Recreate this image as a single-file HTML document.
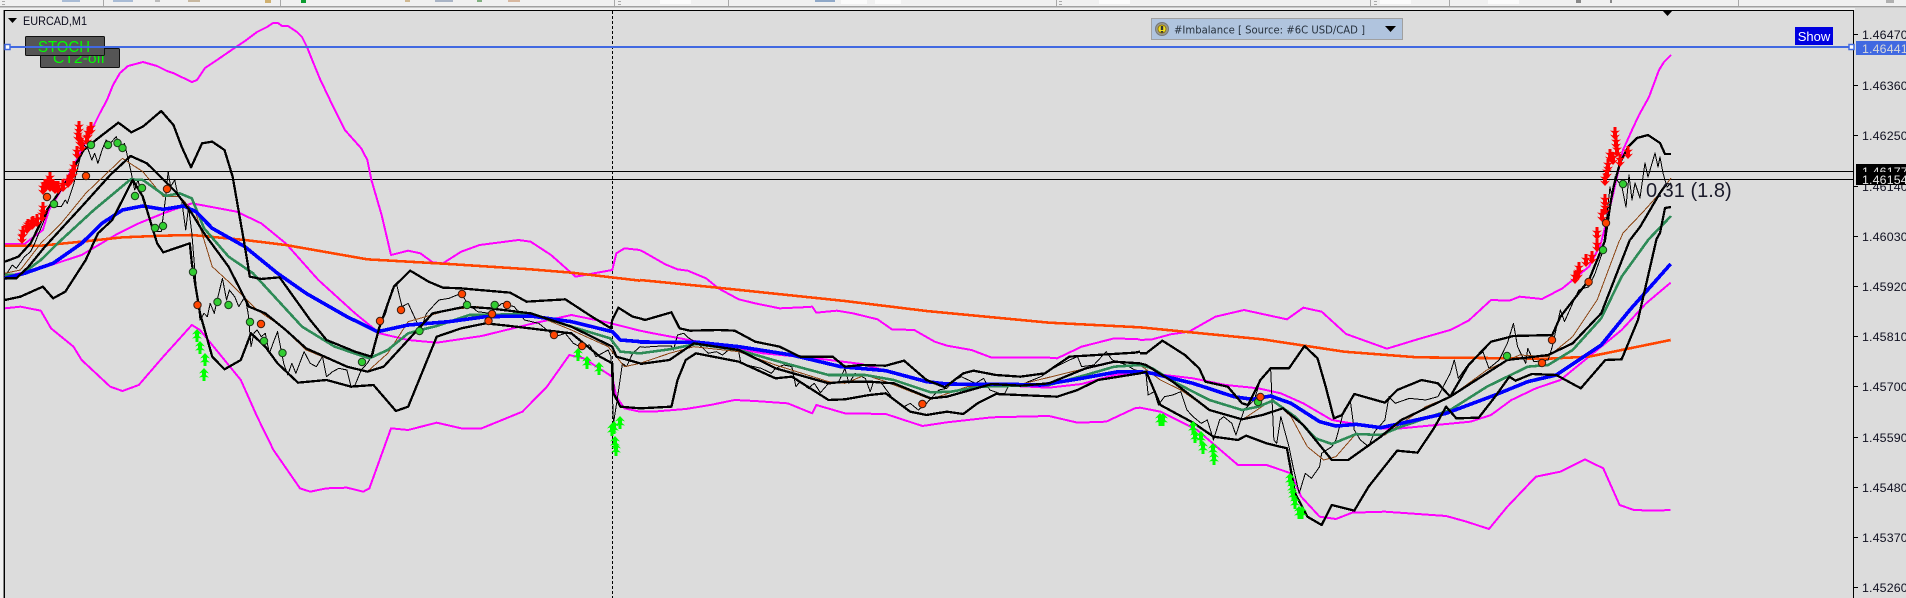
<!DOCTYPE html>
<html>
<head>
<meta charset="utf-8">
<title>EURCAD,M1</title>
<style>
html,body{margin:0;padding:0;width:1906px;height:598px;overflow:hidden;background:#dcdcdc}
svg{display:block;position:absolute;left:0;top:0}
polyline{fill:none;stroke-linejoin:round;vector-effect:non-scaling-stroke}
.m{stroke:#ff00ff;stroke-width:2}
.o{stroke:#ff4500;stroke-width:2.6}
.p{stroke:#000;stroke-width:1}
.br{stroke:#8b4513;stroke-width:1}
.g{stroke:#2e8b57;stroke-width:2.6}
.b{stroke:#0000ff;stroke-width:3.6}
.k{stroke:#000;stroke-width:2.3}
.lab{font:12.4px "Liberation Sans",sans-serif;fill:#101020}
text{white-space:pre}
</style>
</head>
<body>
<svg width="1906" height="598" viewBox="0 0 1906 598" xmlns="http://www.w3.org/2000/svg">
<defs>
<polygon id="u" points="0,-7 5,-1.5 2,-2.5 2,0 5,2.5 1.5,2 1.5,6 -1.5,6 -1.5,2 -5,2.5 -2,0 -2,-2.5 -5,-1.5" fill="#00ff00"/>
<polygon id="d" points="0,7 5,1.5 2,2.5 2,0 5,-2.5 1.5,-2 1.5,-6 -1.5,-6 -1.5,-2 -5,-2.5 -2,0 -2,2.5 -5,1.5" fill="#ff0000"/>
<g id="gd"><circle r="3.7" fill="#32cd32" stroke="#1c3a1c" stroke-width="1"/></g>
<g id="od"><circle r="3.7" fill="#ff4500" stroke="#3a1c10" stroke-width="1"/></g>
</defs>

<!-- toolbar strip -->
<rect x="0" y="0" width="1906" height="10" fill="#f0f0f0"/>
<rect x="0" y="6" width="1906" height="1.5" fill="#a0a0a0"/>
<rect x="1855" y="8" width="51" height="2" fill="#dcdcdc"/>
<rect x="0" y="10" width="4" height="588" fill="#f0f0f0"/>
<rect x="3" y="10" width="1" height="588" fill="#888"/>
<g fill="#a8a8a8">
<rect x="103" y="0" width="1" height="6"/><rect x="280" y="0" width="1" height="6"/><rect x="614" y="0" width="1" height="6"/>
<rect x="728" y="0" width="1" height="6"/><rect x="1056" y="0" width="1" height="6"/><rect x="1370" y="0" width="1" height="6"/>
<rect x="1449" y="0" width="1" height="6"/><rect x="1738" y="0" width="1" height="6"/>
<rect x="2" y="1" width="3" height="1"/><rect x="2" y="4" width="3" height="1"/>
<rect x="618" y="1" width="3" height="1"/><rect x="618" y="4" width="3" height="1"/>
<rect x="1059" y="1" width="3" height="1"/><rect x="1059" y="4" width="3" height="1"/>
<rect x="1374" y="1" width="3" height="1"/><rect x="1374" y="4" width="3" height="1"/>
</g>
<g fill="#fbfbfb">
<rect x="660" y="0" width="31" height="4"/><rect x="841" y="0" width="26" height="4"/><rect x="875" y="0" width="26" height="4"/>
<rect x="1099" y="0" width="31" height="4"/><rect x="1380" y="0" width="31" height="4"/><rect x="1488" y="0" width="31" height="4"/>
</g>
<rect x="62" y="0" width="18" height="2" fill="#a9bcd6"/>
<rect x="113" y="0" width="20" height="2" fill="#a9bcd6"/>
<rect x="155" y="0" width="5" height="2" fill="#bbb"/>
<rect x="188" y="0" width="12" height="2" fill="#c8b8a0"/>
<rect x="265" y="0" width="6" height="3" fill="#d0b070"/>
<rect x="301" y="0" width="5" height="3" fill="#0c9c30"/>
<rect x="405" y="0" width="5" height="2" fill="#d0b890"/>
<rect x="435" y="0" width="18" height="2" fill="#a9b4c6"/>
<rect x="477" y="0" width="5" height="2" fill="#80b080"/>
<rect x="508" y="0" width="12" height="2" fill="#d8b8a0"/>
<rect x="815" y="0" width="20" height="2" fill="#8fa8c8"/>
<rect x="1576" y="0" width="5" height="3" fill="#888"/>
<rect x="1610" y="0" width="2" height="3" fill="#888"/>
<rect x="1886" y="0" width="8" height="3" fill="#b0b0b0"/>

<!-- frame -->
<rect x="4.5" y="10.5" width="1849" height="600" fill="#dcdcdc" stroke="#000" stroke-width="1"/>

<!-- panels behind lines -->
<rect x="40.5" y="48.5" width="79" height="19" fill="#555" stroke="#111" rx="1"/>
<text x="53" y="63" font-family="'Liberation Sans',sans-serif" font-size="15" fill="#00ff00" textLength="52" lengthAdjust="spacingAndGlyphs">CT2-off</text>
<rect x="25.5" y="36.5" width="79" height="19" fill="#555" stroke="#111" rx="1"/>
<text x="38" y="52" font-family="'Liberation Sans',sans-serif" font-size="15.5" fill="#00ff00" textLength="52" lengthAdjust="spacingAndGlyphs">STOCH</text>

<!-- title -->
<polygon points="8,18 17,18 12.5,23" fill="#000"/>
<text x="23" y="25" font-family="'Liberation Sans',sans-serif" font-size="12" fill="#0a0a1a" textLength="64" lengthAdjust="spacingAndGlyphs">EURCAD,M1</text>

<!-- crosshair -->
<line x1="612.5" y1="11" x2="612.5" y2="598" stroke="#000" stroke-width="1" stroke-dasharray="3 2"/>

<!-- horizontal lines -->
<rect x="5" y="171" width="1849" height="1" fill="#000"/>
<rect x="5" y="179" width="1849" height="1" fill="#000"/>

<g shape-rendering="crispEdges">
<!-- magenta top left abs -->
<polyline class="m" points="93,127 100,113 107,100 113,85 120,73 128,66 143,62 157,66 167,71 173,73 192,82 197,80 205,68 217,60 233,49 245,41 257,32 267,27 273,23 278,23 282,26 288,26 297,32 302,37 307,47 313,62 320,79 330,100"/>
<polyline class="m" points="1601,243 1613,195 1623,150 1632,130 1639,115 1649,97 1659,70 1664,62 1671,55"/>

<!-- ZONE A: x 0-640 -->
<g transform="translate(0,100) scale(.40816,.33333)">
<polyline class="m" points="12,432 60,432 105,390 120,330 150,270 200,150 228,81"/>
<polyline class="m" points="808,0 845,90 885,145 900,180 910,240 935,345 958,465 1000,452 1030,460 1060,487 1085,490 1130,455 1175,435 1270,420 1300,425 1350,465 1410,530 1500,510 1510,460 1530,445 1568,450"/>
<polyline class="m" points="12,530 100,505 200,465 290,400 340,370 400,340 470,310 580,335 640,370 700,430 780,540 870,640 930,700 1000,720 1070,728 1180,708 1300,672 1400,645 1480,665 1568,692"/>
<polyline class="m" points="12,625 50,620 100,632 125,685 180,740 200,780 270,860 300,873 340,855 400,770 470,675 490,690 550,780 590,840 630,950 670,1050 735,1165 760,1175 800,1165 850,1163 890,1175 905,1165 958,985 1000,990 1070,968 1130,985 1180,985 1280,935 1340,860 1395,765 1430,775 1500,830 1510,890 1530,925 1568,935"/>
<polyline class="o" points="12,437 100,437 200,425 300,412 400,407 470,405 600,420 700,435 900,478 1100,492 1300,508 1400,518 1568,542"/>
<polyline class="p" points="12,530 30,495 40,505 50,488 60,470 75,455 85,430 100,385 115,340 125,305 135,320 150,320 160,300 165,310 180,255 195,180 205,135 215,145 225,180 232,160 240,190 250,150 260,120 270,130 285,110 295,150 305,130 320,210 330,270 338,240 350,300 365,350 380,395 395,395 405,300 412,215 418,260 428,240 435,280 445,300 455,390 462,320 470,400 480,550 490,660 500,640 508,650 515,610 525,640 532,600 545,535 555,600 562,570 575,590 585,620 600,590 608,640 615,740 622,700 630,690 640,710 650,700 660,760 672,720 680,695 695,790 705,825 715,790 725,820 745,755 760,790 775,800 790,770 800,830 815,815 830,805 850,810 860,860 870,855 885,810 900,790 915,760 925,690 945,640 960,570 972,555 985,620 1000,610 1015,650 1030,690 1045,640 1060,620 1075,600 1100,595 1130,580 1145,610 1170,635 1200,640 1215,625 1230,610 1260,620 1285,660 1320,670 1340,690 1360,710 1385,700 1405,730 1420,740 1445,735 1460,770 1490,750 1497,770 1503,970 1512,900 1525,790 1535,800 1550,760 1568,740"/>
<polyline class="br" points="12,520 50,510 100,430 150,370 210,280 300,175 350,215 400,290 440,290 480,340 520,500 560,545 630,630 690,680 750,750 860,805 900,815 950,760 1000,665 1100,630 1170,620 1300,640 1400,690 1490,740 1530,800 1568,790"/>
<polyline class="g" points="12,525 50,525 100,480 150,420 230,330 320,238 350,240 405,288 440,280 470,295 500,385 560,470 620,520 680,600 740,680 820,740 905,775 950,750 1000,700 1030,690 1070,678 1150,645 1200,645 1300,640 1400,680 1495,715 1520,755 1568,760"/>
<polyline class="b" points="12,535 60,520 130,490 200,430 250,370 300,330 350,318 400,328 450,318 480,335 520,385 600,440 680,520 750,580 850,650 925,695 1000,675 1100,665 1190,650 1300,648 1400,665 1500,695 1520,720 1568,725"/>
<polyline class="k" points="12,535 40,535 70,500 110,440 200,320 270,225 320,168 360,190 430,275 470,340 500,400 560,500 610,620 650,640 700,690 750,745 850,800 900,815 940,800 1000,720 1060,640 1140,620 1200,625 1300,640 1400,680 1500,740 1510,770 1568,790"/>
<polyline class="k" points="12,485 45,470 75,430 115,330 160,250 205,150 240,115 290,68 322,97 350,80 395,33 425,75 445,140 468,202 495,130 520,125 550,150 570,230 600,440 612,530 640,537 685,532 760,660 800,720 870,755 910,770 930,680 965,560 1005,512 1050,545 1085,563 1130,565 1175,570 1250,578 1290,605 1385,598 1450,650 1497,685 1500,660 1515,623 1550,650 1568,655"/>
<polyline class="k" points="12,600 50,590 105,560 130,595 160,575 210,480 240,400 275,360 325,240 350,290 385,430 400,457 465,430 470,490 490,640 520,770 550,808 590,780 615,700 650,740 680,790 730,848 800,840 860,860 915,855 970,933 1000,920 1070,710 1130,685 1190,670 1250,678 1400,700 1470,770 1500,790 1503,880 1520,920 1568,925"/>
</g>

<!-- ZONE B: x 640-1143 -->
<g transform="translate(600,240) scale(.40816,.33333)">
<polyline class="m" points="98,30 110,38 160,73 190,88 215,92 260,115 290,145 340,178 380,190 440,205 495,202 520,200 530,218 580,212 620,220 680,238 715,268 770,270 820,305 850,317 910,330 960,353 1100,353 1120,355 1180,320 1260,295 1323,298"/>
<polyline class="m" points="98,272 130,280 240,305 400,340 530,355 640,372 800,425 860,435 1000,437 1100,443 1180,432 1260,405 1323,396"/>
<polyline class="m" points="98,514 130,515 210,507 270,495 330,480 380,483 460,490 520,520 530,495 600,520 700,522 790,558 850,547 960,532 1100,528 1170,548 1240,545 1310,505 1323,503"/>
<polyline class="o" points="98,120 280,142 600,183 800,213 1100,248 1323,262"/>
<polyline class="p" points="98,320 110,322 125,320 150,318 175,318 180,330 190,285 205,280 215,292 225,300 240,310 265,340 285,335 300,345 315,330 340,335 345,370 370,378 395,385 420,400 430,385 450,375 470,380 480,440 490,425 510,445 525,430 540,458 560,430 585,425 600,385 610,430 625,400 650,415 662,455 670,425 690,430 705,455 720,480 745,500 760,490 780,510 800,490 830,450 850,445 870,420 885,410 920,430 940,415 955,450 990,465 1000,440 1040,430 1080,410 1110,385 1150,360 1170,350 1180,380 1210,375 1240,335 1255,360 1290,375 1310,390 1335,395"/>
<polyline class="br" points="98,370 170,340 230,320 340,335 430,375 560,425 600,430 650,405 700,425 810,478 900,440 1040,430 1190,385 1260,365 1323,372"/>
<polyline class="g" points="98,340 170,328 235,312 340,330 430,362 560,405 650,405 720,420 810,457 860,455 930,440 1100,435 1190,405 1260,380 1323,375"/>
<polyline class="b" points="98,306 240,307 340,320 470,345 590,380 700,392 800,425 850,432 1000,433 1080,435 1180,415 1270,395 1323,395"/>
<polyline class="k" points="98,372 170,360 230,310 340,330 430,385 560,430 600,425 660,425 720,430 810,475 850,470 960,432 1030,437 1100,430 1190,385 1260,365 1323,370"/>
<polyline class="k" points="98,235 110,240 175,217 195,265 220,272 290,270 330,272 380,305 440,320 490,350 570,350 600,380 640,375 700,377 745,362 800,420 845,442 890,400 915,392 970,405 1030,410 1090,400 1150,350 1310,338 1323,335"/>
<polyline class="k" points="98,505 175,500 190,420 210,360 235,340 340,365 430,415 470,410 560,480 600,478 660,465 700,460 760,515 800,525 850,515 890,522 925,490 970,462 1120,470 1170,450 1220,420 1323,400"/>
</g>

<!-- ZONE C: x 1140-1671 -->
<g transform="translate(1140,240) scale(.40816,.33333)">
<polyline class="m" points="0,300 30,298 75,283 120,275 185,230 255,210 360,238 400,203 445,215 505,282 605,326 680,298 760,270 805,242 860,180 905,182 930,170 985,177 1035,145 1060,120 1100,80 1130,10"/>
<polyline class="m" points="0,396 60,405 130,415 210,435 290,445 345,460 400,490 470,540 590,565 640,565 810,545 860,525 910,480 970,445 1030,420 1100,350 1180,270 1240,190 1300,128"/>
<polyline class="m" points="0,503 50,515 140,570 240,675 310,675 370,700 395,770 440,830 480,837 520,818 600,815 750,828 800,845 855,867 900,800 970,710 1030,695 1090,658 1135,685 1175,795 1210,810 1260,812 1300,810"/>
<polyline class="o" points="0,262 300,298 500,335 680,352 1000,356 1100,350 1200,325 1300,300"/>
<polyline class="p" points="10,395 15,405 20,465 35,455 45,495 60,470 80,465 100,455 115,510 130,530 150,550 165,540 180,600 195,540 205,530 225,550 235,585 255,510 280,480 295,420 320,385 328,600 335,610 345,530 365,620 375,680 390,760 405,700 420,715 440,680 445,640 470,620 480,600 500,510 515,480 525,570 540,600 560,620 575,575 600,540 610,470 625,490 660,475 700,480 730,470 760,400 770,360 780,415 800,380 840,335 855,385 880,360 900,310 915,250 925,320 945,370 950,325 965,365 1000,360 1010,320 1030,210 1040,245 1060,190 1075,150 1100,140 1115,100 1135,30"/>
<polyline class="br" points="0,375 50,420 100,450 170,510 250,540 325,478 370,530 410,620 450,660 480,650 530,580 600,585 700,500 760,470 850,390 930,345 1000,350 1060,290 1120,180 1175,0"/>
<polyline class="g" points="0,375 30,385 90,430 170,480 250,510 290,500 325,482 380,530 430,595 470,612 530,582 590,585 640,560 760,510 850,440 950,380 1000,375 1060,330 1130,235 1180,110 1245,0"/>
<polyline class="b" points="0,395 30,400 130,430 230,470 275,478 320,468 370,490 440,545 480,558 530,553 590,563 640,550 750,520 870,465 950,425 1020,405 1130,315 1200,210 1300,72"/>
<polyline class="k" points="0,370 15,375 80,425 170,510 250,538 300,525 350,505 400,555 470,660 510,660 590,590 640,540 760,470 900,360 1000,345 1060,310 1130,220 1200,0"/>
<polyline class="k" points="0,340 15,340 55,302 110,345 145,385 160,425 215,440 250,490 265,495 295,420 320,385 365,385 403,318 435,355 455,440 475,535 495,525 525,462 600,488 630,450 690,420 730,430 760,470 805,375 860,305 915,288 1010,285 1030,230 1100,120 1140,0"/>
<polyline class="k" points="0,400 15,395 50,495 130,548 180,590 240,600 260,587 310,610 360,625 380,760 410,830 445,855 470,795 525,812 560,740 630,632 680,638 720,565 750,500 775,535 830,533 870,470 905,410 920,422 960,402 1020,405 1080,445 1140,360 1180,358 1220,240 1265,0"/>
</g>

<!-- right upper abs -->
<polyline class="p" points="1603,250 1607,215 1610,187 1612,197 1615,177 1622,187 1626,207 1629,175 1632,200 1635,183 1640,198 1645,163 1648,177 1655,153 1658,167 1660,157 1663,173 1667,187 1671,183"/>
<polyline class="br" points="1620,240 1623,233 1643,212 1660,193 1671,178"/>
<polyline class="g" points="1648,240 1671,216"/>
<polyline class="k" points="1630,240 1640,227 1660,193 1667,183"/>
<polyline class="k" points="1605,240 1611,200 1614,185 1620,163 1628,147 1637,138 1648,135 1660,143 1665,154 1671,154"/>
<polyline class="k" points="1656,240 1660,233 1665,208 1671,207"/>
</g>

<!-- red arrows -->
<g>
<use href="#d" x="79" y="127"/><use href="#d" x="78" y="135"/><use href="#d" x="80" y="140"/><use href="#d" x="82" y="145"/><use href="#d" x="91" y="128"/><use href="#d" x="88" y="133"/><use href="#d" x="87" y="138"/><use href="#d" x="77" y="152"/><use href="#d" x="74" y="167"/><use href="#d" x="73" y="172"/><use href="#d" x="71" y="177"/><use href="#d" x="68" y="181"/><use href="#d" x="63" y="185"/><use href="#d" x="58" y="187"/><use href="#d" x="55" y="187"/><use href="#d" x="53" y="185"/><use href="#d" x="50" y="178"/><use href="#d" x="50" y="185"/><use href="#d" x="48" y="183"/><use href="#d" x="45" y="185"/><use href="#d" x="43" y="188"/><use href="#d" x="43" y="208"/><use href="#d" x="42" y="215"/><use href="#d" x="37" y="220"/><use href="#d" x="33" y="222"/><use href="#d" x="32" y="223"/><use href="#d" x="28" y="225"/><use href="#d" x="27" y="227"/><use href="#d" x="23" y="232"/><use href="#d" x="22" y="237"/>
<use href="#d" x="1615" y="133"/><use href="#d" x="1616" y="142"/><use href="#d" x="1617" y="150"/><use href="#d" x="1610" y="155"/><use href="#d" x="1628" y="152"/><use href="#d" x="1620" y="160"/><use href="#d" x="1613" y="158"/><use href="#d" x="1608" y="165"/><use href="#d" x="1607" y="172"/><use href="#d" x="1605" y="179"/><use href="#d" x="1605" y="200"/><use href="#d" x="1605" y="208"/><use href="#d" x="1602" y="215"/><use href="#d" x="1597" y="233"/><use href="#d" x="1597" y="245"/><use href="#d" x="1592" y="257"/><use href="#d" x="1586" y="260"/><use href="#d" x="1579" y="268"/><use href="#d" x="1578" y="273"/><use href="#d" x="1575" y="277"/>
</g>

<!-- green arrows -->
<g>
<use href="#u" x="197" y="336"/><use href="#u" x="200" y="348"/><use href="#u" x="205" y="360"/><use href="#u" x="204" y="375"/><use href="#u" x="578" y="355"/><use href="#u" x="587" y="363"/><use href="#u" x="599" y="369"/><use href="#u" x="612" y="430"/><use href="#u" x="614" y="428"/><use href="#u" x="620" y="423"/><use href="#u" x="615" y="443"/><use href="#u" x="616" y="450"/>
<use href="#u" x="1160" y="420"/><use href="#u" x="1163" y="420"/><use href="#u" x="1193" y="428"/><use href="#u" x="1195" y="437"/><use href="#u" x="1201" y="438"/><use href="#u" x="1203" y="448"/><use href="#u" x="1213" y="450"/><use href="#u" x="1214" y="459"/><use href="#u" x="1290" y="480"/><use href="#u" x="1292" y="488"/><use href="#u" x="1293" y="495"/><use href="#u" x="1295" y="503"/><use href="#u" x="1299" y="513"/><use href="#u" x="1302" y="513"/>
</g>

<!-- dots -->
<g>
<use href="#gd" x="91" y="145"/><use href="#gd" x="108" y="145"/><use href="#gd" x="117.5" y="143"/><use href="#gd" x="122.5" y="148"/><use href="#gd" x="54" y="204"/><use href="#gd" x="135" y="196"/><use href="#gd" x="142" y="188"/><use href="#gd" x="155" y="228"/><use href="#gd" x="163" y="226"/><use href="#gd" x="193" y="272"/><use href="#gd" x="217.5" y="302"/><use href="#gd" x="228.5" y="305"/><use href="#gd" x="250" y="322"/><use href="#gd" x="264" y="341"/><use href="#gd" x="282.5" y="353"/><use href="#gd" x="362" y="362"/><use href="#gd" x="419.5" y="331"/><use href="#gd" x="467" y="305"/><use href="#gd" x="494.7" y="305"/>
<use href="#od" x="86" y="176"/><use href="#od" x="47" y="197"/><use href="#od" x="167" y="189"/><use href="#od" x="197.5" y="305"/><use href="#od" x="261" y="324"/><use href="#od" x="380" y="321"/><use href="#od" x="401" y="310"/><use href="#od" x="462" y="294"/><use href="#od" x="488.5" y="321"/><use href="#od" x="492" y="314"/><use href="#od" x="507" y="305"/><use href="#od" x="554" y="335"/><use href="#od" x="582" y="346"/><use href="#od" x="922.4" y="404"/>
<use href="#gd" x="1258" y="402"/><use href="#od" x="1260.4" y="397"/><use href="#gd" x="1507" y="356"/><use href="#od" x="1552" y="340"/><use href="#od" x="1542" y="363"/><use href="#od" x="1588.6" y="282"/><use href="#gd" x="1603" y="250"/><use href="#od" x="1606" y="223"/><use href="#gd" x="1623" y="184"/>
</g>

<!-- Blue hline -->
<rect x="5" y="46" width="1849" height="2" fill="#4169e1"/>
<rect x="5" y="44.5" width="5" height="5" fill="#fff" stroke="#4169e1" stroke-width="1.5"/>
<rect x="1849" y="44.5" width="5" height="5" fill="#fff" stroke="#4169e1" stroke-width="1.5"/>

<!-- top marker -->
<polygon points="1662,10 1673,10 1667.5,16" fill="#000"/>

<!-- Imbalance panel -->
<rect x="1151.5" y="18.5" width="251" height="21" fill="#b0c4de" stroke="#a0a0a0" stroke-width="1"/>
<circle cx="1162" cy="29" r="6.5" fill="#9a9a8a" stroke="#777"/>
<circle cx="1162" cy="29" r="4" fill="#f0e020" stroke="#806000" stroke-width=".7"/>
<rect x="1160.8" y="26" width="2.4" height="4" fill="#333"/>
<rect x="1160.8" y="31" width="2.4" height="1.5" fill="#333"/>
<text x="1174" y="33.5" font-family="'DejaVu Sans',sans-serif" font-size="11" fill="#26303c" textLength="191" lengthAdjust="spacingAndGlyphs">#Imbalance [ Source: #6C USD/CAD ]</text>
<polygon points="1385,26 1396,26 1390.5,32" fill="#000"/>

<!-- Show button -->
<rect x="1795" y="27" width="38" height="18" fill="#0000e0"/>
<text x="1814" y="41" text-anchor="middle" font-family="'Liberation Sans',sans-serif" font-size="13" fill="#fff">Show</text>

<!-- 0.31 text -->
<text x="1646" y="197" font-family="'Liberation Sans',sans-serif" font-size="20" fill="#1a1a2a">0.31 (1.8)</text>

<!-- axis ticks -->
<g fill="#000">
<rect x="1854" y="34" width="4" height="1"/><rect x="1854" y="85" width="4" height="1"/><rect x="1854" y="135" width="4" height="1"/><rect x="1854" y="186" width="4" height="1"/><rect x="1854" y="236" width="4" height="1"/><rect x="1854" y="286" width="4" height="1"/><rect x="1854" y="336" width="4" height="1"/><rect x="1854" y="386" width="4" height="1"/><rect x="1854" y="437" width="4" height="1"/><rect x="1854" y="487" width="4" height="1"/><rect x="1854" y="537" width="4" height="1"/><rect x="1854" y="587" width="4" height="1"/>
</g>

<!-- axis labels -->
<g class="lab" letter-spacing=".15">
<text class="lab" x="1862" y="39">1.46470</text>
<text class="lab" x="1862" y="90">1.46360</text>
<text class="lab" x="1862" y="140">1.46250</text>
<text class="lab" x="1862" y="191">1.46140</text>
<text class="lab" x="1862" y="241">1.46030</text>
<text class="lab" x="1862" y="291">1.45920</text>
<text class="lab" x="1862" y="341">1.45810</text>
<text class="lab" x="1862" y="391">1.45700</text>
<text class="lab" x="1862" y="442">1.45590</text>
<text class="lab" x="1862" y="492">1.45480</text>
<text class="lab" x="1862" y="542">1.45370</text>
<text class="lab" x="1862" y="592">1.45260</text>
</g>

<!-- price tags -->
<rect x="1856" y="41" width="50" height="14" fill="#4169e1"/>
<text x="1862" y="53" font-family="'Liberation Sans',sans-serif" font-size="12.4" letter-spacing=".15" fill="#d8d8d8">1.46441</text>
<rect x="1856" y="164" width="50" height="14" fill="#000"/>
<text x="1862" y="176" font-family="'Liberation Sans',sans-serif" font-size="12.4" letter-spacing=".15" fill="#e8e8e8">1.46177</text>
<rect x="1856" y="172" width="50" height="13" fill="#000"/>
<text x="1862" y="184" font-family="'Liberation Sans',sans-serif" font-size="12.4" letter-spacing=".15" fill="#e8e8e8">1.46154</text>
</svg>
</body>
</html>
